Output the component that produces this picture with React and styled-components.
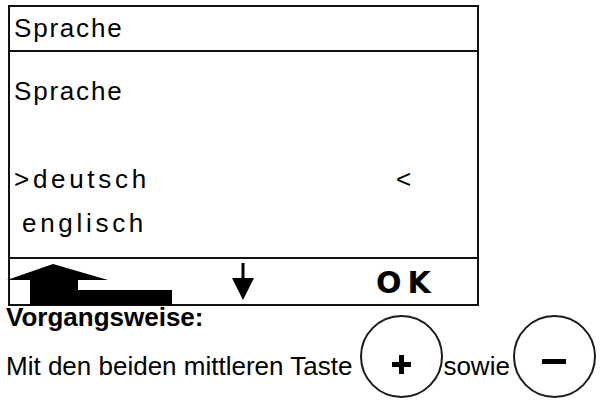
import React from "react";
import styled, { createGlobalStyle } from "styled-components";

const GlobalStyle = createGlobalStyle`
  html, body {
    margin: 0;
    padding: 0;
    background: #ffffff;
  }

  body {
    font-family: "Liberation Sans", Arial, Helvetica, sans-serif;
    color: #000;
  }
`;

const Page = styled.div`
  width: 606px;
  height: 401px;
  overflow: hidden;
`;

const Display = styled.div`
  box-sizing: border-box;
  width: 471px;
  margin: 5px 0 0 8px;
  border: 2px solid #111;
  background: #fff;
`;

const TitleBar = styled.div`
  height: 43px;
  padding-left: 4px;
  border-bottom: 2px solid #111;
  font-size: 26px;
  line-height: 43px;
  letter-spacing: 1.8px;
`;

const Content = styled.div`
  box-sizing: border-box;
  height: 207px;
  padding: 17px 0 14px 4px;
  border-bottom: 2px solid #111;
  font-size: 26px;
`;

const Line = styled.div`
  display: grid;
  grid-template-columns: 382px auto;
  height: 44px;
  line-height: 44px;
  padding-left: ${(p) => p.$indent || 0}px;
  letter-spacing: ${(p) => p.$spacing || 0}px;
  white-space: pre;
`;

const Marker = styled.span`
  letter-spacing: 0;
`;

const SoftKeys = styled.div`
  display: flex;
  align-items: flex-start;
  height: 45px;

  svg {
    display: block;
    flex: none;
  }
`;

const HomeIcon = styled.svg`
  margin: 5px 0 0 -3px;
`;

const DownIcon = styled.svg`
  margin: 4px 0 0 60px;
`;

const OkLabel = styled.span`
  margin: 9px 0 0 122px;
  font-family: "DejaVu Sans", "Liberation Sans", sans-serif;
  font-weight: 700;
  font-size: 30px;
  line-height: 30px;
  letter-spacing: 6px;
`;

const Instructions = styled.div`
  margin-left: 6px;
  font-size: 26px;
  line-height: 26px;
`;

const Heading = styled.div`
  margin-top: -2px;
  font-weight: 700;
`;

const KeyRow = styled.div`
  display: flex;
  align-items: flex-start;
  margin-top: -15px;
  white-space: nowrap;
`;

const Phrase = styled.span`
  margin-top: 38px;
`;

const Key = styled.div`
  box-sizing: border-box;
  flex: none;
  display: flex;
  justify-content: center;
  align-items: flex-start;
  width: 83px;
  height: 83px;
  margin-left: ${(p) => p.$gap}px;
  padding-top: ${(p) => p.$top}px;
  border: 2.5px solid #1a1a1a;
  border-radius: 50%;

  svg {
    display: block;
  }
`;

const Home = () => (
  <HomeIcon width="165" height="41" viewBox="0 0 165 41">
    <polygon points="0,16 46,0 101,16" fill="#000" />
    <rect x="23" y="15" width="48" height="26" fill="#000" />
    <rect x="70" y="26" width="95" height="15" fill="#000" />
  </HomeIcon>
);

const Down = () => (
  <DownIcon width="22" height="38" viewBox="0 0 22 38">
    <rect x="9.5" y="0" width="3" height="17" fill="#000" />
    <polygon points="0,15 22,15 11,37" fill="#000" />
  </DownIcon>
);

const Plus = () => (
  <svg width="19" height="19" viewBox="0 0 19 19">
    <rect x="7" y="0" width="5" height="19" fill="#000" />
    <rect x="0" y="7" width="19" height="5" fill="#000" />
  </svg>
);

const Minus = () => (
  <svg width="24" height="5" viewBox="0 0 24 5">
    <rect x="0" y="0" width="24" height="5" fill="#000" />
  </svg>
);

export default function App() {
  return (
    <Page>
      <GlobalStyle />
      <Display>
        <TitleBar>Sprache</TitleBar>
        <Content>
          <Line $spacing={1.8}>Sprache</Line>
          <Line />
          <Line $spacing={3.7}>
            <span>&gt;deutsch</span>
            <Marker>&lt;</Marker>
          </Line>
          <Line $spacing={3.7} $indent={8}>
            englisch
          </Line>
        </Content>
        <SoftKeys>
          <Home />
          <Down />
          <OkLabel>OK</OkLabel>
        </SoftKeys>
      </Display>
      <Instructions>
        <Heading>Vorgangsweise:</Heading>
        <KeyRow>
          <Phrase>Mit den beiden mittleren Taste</Phrase>
          <Key $gap={8} $top={38}>
            <Plus />
          </Key>
          <Phrase>sowie</Phrase>
          <Key $gap={3} $top={41.5}>
            <Minus />
          </Key>
        </KeyRow>
      </Instructions>
    </Page>
  );
}
